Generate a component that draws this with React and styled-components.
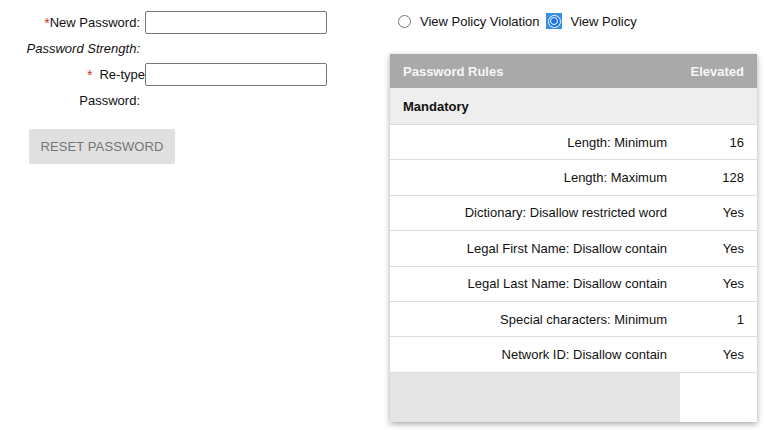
import React from "react";
import styled, { createGlobalStyle } from "styled-components";

const Global = createGlobalStyle`
  html, body { margin: 0; padding: 0; background: #fff; }
  body { font-family: "Liberation Sans", Arial, sans-serif; font-size: 13px; color: #111; }
`;

const Page = styled.div`
  display: flex;
  align-items: flex-start;
  width: 766px;
  height: 430px;
`;

const Left = styled.div`
  width: 390px;
  padding-top: 11px;
  box-sizing: border-box;
`;

const FormGrid = styled.div`
  display: grid;
  grid-template-columns: 145px 182px;
  row-gap: 0;
`;

const Label = styled.div`
  text-align: right;
  padding-right: ${(p) => (p.$flush ? 0 : 5)}px;
  height: ${(p) => p.$h}px;
  display: flex;
  align-items: center;
  justify-content: flex-end;
  font-style: ${(p) => (p.$italic ? "italic" : "normal")};
  white-space: nowrap;
`;

const Star = styled.span`
  color: #c0392b;
  font-size: 14px;
  margin-right: ${(p) => p.$gap || 0}px;
`;

const Input = styled.input`
  box-sizing: border-box;
  width: 182px;
  height: 23px;
  border: 1px solid #767676;
  border-radius: 2px;
  margin: 0;
  padding: 2px 4px;
  font: inherit;
`;

const Spacer = styled.div`
  height: ${(p) => p.$h}px;
`;

const ResetButton = styled.button`
  margin: 14px 0 0 29px;
  width: 146px;
  height: 35px;
  border: none;
  border-radius: 2px;
  background: #e0e0e0;
  color: #757575;
  font-family: "Liberation Sans", Arial, sans-serif;
  font-size: 13px;
  letter-spacing: 0.1px;
  padding: 0;
`;

const Right = styled.div`
  width: 367px;
  display: flex;
  flex-direction: column;
`;

const RadioRow = styled.div`
  display: flex;
  align-items: center;
  height: 16px;
  margin-top: 13px;
`;

const RadioOff = styled.span`
  box-sizing: border-box;
  width: 13px;
  height: 13px;
  border: 1px solid #767676;
  border-radius: 50%;
  margin: 0 9px 0 8px;
`;

const RadioOnBox = styled.span`
  width: 16px;
  height: 16px;
  background: #3b8fe3;
  display: flex;
  align-items: center;
  justify-content: center;
  margin: 0 8px 0 7px;
`;

const RadioOnRing = styled.span`
  box-sizing: border-box;
  width: 13px;
  height: 13px;
  border-radius: 50%;
  border: 1.5px solid #fff;
  background: #1a73e8;
  display: flex;
  align-items: center;
  justify-content: center;
`;

const RadioDot = styled.span`
  box-sizing: border-box;
  width: 8px;
  height: 8px;
  border-radius: 50%;
  border: 1.5px solid #fff;
  background: #1a73e8;
`;

const RadioText = styled.span`
  white-space: nowrap;
`;

const Panel = styled.div`
  margin-top: 25px;
  box-shadow: 0 2px 6px rgba(0, 0, 0, 0.35);
  background: #fff;
`;

const Head = styled.div`
  display: flex;
  justify-content: space-between;
  align-items: center;
  height: 34px;
  padding: 0 13px;
  background: #a9a9a9;
  color: #f6f6f6;
  font-weight: bold;
`;

const Section = styled.div`
  height: 36px;
  display: flex;
  align-items: center;
  padding: 0 13px;
  background: #eeeeee;
  font-weight: bold;
  color: #111;
`;

const Row = styled.div`
  display: grid;
  grid-template-columns: 290px 77px;
  height: 35.4px;
  box-sizing: border-box;
  border-top: 1px solid #dcdcdc;
  align-items: center;
`;

const Cell = styled.div`
  text-align: right;
  padding-right: 13px;
  white-space: nowrap;
`;

const Footer = styled.div`
  display: grid;
  grid-template-columns: 290px 77px;
  height: 49px;
  border-top: 1px solid #dcdcdc;
`;

const FooterCell = styled.div`
  background: ${(p) => (p.$grey ? "#e5e5e5" : "#fff")};
`;

const rules = [
  ["Length: Minimum", "16"],
  ["Length: Maximum", "128"],
  ["Dictionary: Disallow restricted word", "Yes"],
  ["Legal First Name: Disallow contain", "Yes"],
  ["Legal Last Name: Disallow contain", "Yes"],
  ["Special characters: Minimum", "1"],
  ["Network ID: Disallow contain", "Yes"],
];

export default function App() {
  return (
    <>
      <Global />
      <Page>
        <Left>
          <FormGrid>
            <Label $h={23}>
              <Star>*</Star>New Password:
            </Label>
            <Input type="password" />
            <Label $h={29} $italic>
              Password Strength:
            </Label>
            <Spacer $h={29} />
            <Label $h={23} $flush>
              <Star $gap={7}>*</Star>Re-type
            </Label>
            <Input type="password" />
            <Label $h={29}>Password:</Label>
            <Spacer $h={29} />
          </FormGrid>
          <ResetButton>RESET PASSWORD</ResetButton>
        </Left>
        <Right>
          <RadioRow>
            <RadioOff />
            <RadioText>View Policy Violation</RadioText>
            <RadioOnBox>
              <RadioOnRing>
                <RadioDot />
              </RadioOnRing>
            </RadioOnBox>
            <RadioText>View Policy</RadioText>
          </RadioRow>
          <Panel>
            <Head>
              <span>Password Rules</span>
              <span>Elevated</span>
            </Head>
            <Section>Mandatory</Section>
            {rules.map(([k, v]) => (
              <Row key={k}>
                <Cell>{k}</Cell>
                <Cell>{v}</Cell>
              </Row>
            ))}
            <Footer>
              <FooterCell $grey />
              <FooterCell />
            </Footer>
          </Panel>
        </Right>
      </Page>
    </>
  );
}
